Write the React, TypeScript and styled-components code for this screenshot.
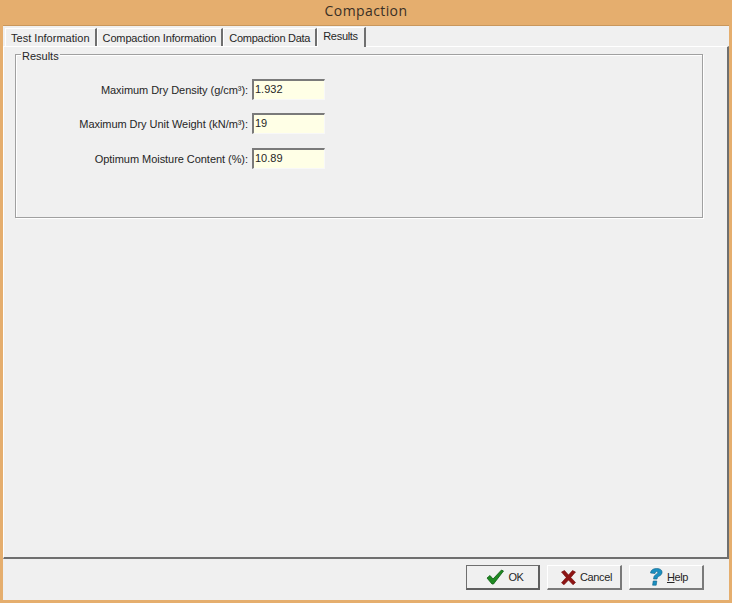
import React from "react";
import styled, { createGlobalStyle } from "styled-components";

const GlobalStyle = createGlobalStyle`
  html, body {
    margin: 0;
    padding: 0;
    background: #e5ae6e;
  }
  body {
    font-family: "Liberation Sans", Arial, sans-serif;
    font-size: 11px;
    color: #262626;
  }
`;

const fields = [
  { label: "Maximum Dry Density (g/cm³):", value: "1.932", gap: 13 },
  { label: "Maximum Dry Unit Weight (kN/m³):", value: "19", gap: 14 },
  { label: "Optimum Moisture Content (%):", value: "10.89", gap: 0 },
];

const tabs = [
  { title: "Test Information", spacing: 0.02 },
  { title: "Compaction Information", spacing: -0.14 },
  { title: "Compaction Data", spacing: -0.27 },
  { title: "Results", spacing: -0.3 },
];

const CheckIcon = () => (
  <svg width="18" height="16" viewBox="0 0 18 16">
    <path d="M1 9 L4 6.5 L7 10 L15.5 1 L17.5 2 L7.5 15 L6 15 Z" fill="#1f8a22" stroke="#0c5c10" strokeWidth="0.8" />
  </svg>
);

const CrossIcon = () => (
  <svg width="15" height="15" viewBox="0 0 15 15">
    <path d="M0.5 2 L3.5 0.5 L7.5 5 L11.5 0.5 L14.5 2 L9.8 7.5 L14.5 12.5 L12 14.8 L7.5 10 L3 14.8 L0.5 12.8 L5.2 7.5 Z" fill="#8e1414" stroke="#6e0c0c" strokeWidth="0.6" />
  </svg>
);

const HelpIcon = () => (
  <svg width="14" height="18" viewBox="0 0 14 18">
    <path d="M1.5 5 C2 1.5 5 0.5 7.5 0.5 C11 0.5 13.5 2 13 5 C12.6 7.5 9.5 8 8.5 9.5 L8 11 L4.5 11 L5 8.5 C5.5 6.8 8.8 6 8.8 4.4 C8.8 3.2 6.6 3 6 5.5 Z" fill="#1b8fc0" stroke="#0e6288" strokeWidth="0.6" />
    <path d="M4.2 13 L7.8 13 L7.2 17.2 L3.6 17.2 Z" fill="#1b8fc0" stroke="#0e6288" strokeWidth="0.6" />
  </svg>
);

export default function App() {
  return (
    <Window>
      <GlobalStyle />
      <TitleBar>Compaction</TitleBar>
      <Client>
        <TabStrip>
          {tabs.map((t, i) => (
            <Tab key={t.title} $active={i === 3} $spacing={t.spacing}>{t.title}</Tab>
          ))}
        </TabStrip>
        <TabPage>
          <GroupBox>
            <Legend>Results</Legend>
            <FieldGrid>
              {fields.map((f) => (
                <FieldRow key={f.label} $gap={f.gap}>
                  <FieldLabel>{f.label}</FieldLabel>
                  <FieldInput readOnly value={f.value} />
                </FieldRow>
              ))}
            </FieldGrid>
          </GroupBox>
        </TabPage>
        <Footer>
          <Button $default>
            <CheckIcon />
            <span>OK</span>
          </Button>
          <Button>
            <CrossIcon />
            <span>Cancel</span>
          </Button>
          <Button>
            <HelpIcon />
            <span><u>H</u>elp</span>
          </Button>
        </Footer>
      </Client>
    </Window>
  );
}

const Window = styled.div`
  width: 732px;
  height: 603px;
  display: flex;
  flex-direction: column;
  background: #e5ae6e;
  box-sizing: border-box;
  padding: 0 3px 3px;
  overflow: hidden;
`;

const TitleBar = styled.div`
  height: 25px;
  line-height: 21px;
  text-align: center;
  font-size: 14px;
  letter-spacing: 0.4px;
  color: #3a3026;
  font-family: "Open Sans", sans-serif;
  flex: none;
`;

const Client = styled.div`
  flex: 1;
  display: flex;
  flex-direction: column;
  background: #f0f0f0;
  border-top: 1px solid #c9975c;
`;

const TabStrip = styled.div`
  display: flex;
  align-items: flex-end;
  height: 20px;
  padding-left: 2px;
  flex: none;
`;

const Tab = styled.div<{ $active?: boolean; $spacing: number }>`
  box-sizing: border-box;
  height: ${(p) => (p.$active ? 20 : 18)}px;
  padding: ${(p) => (p.$active ? "2px 6px 0 5px" : "3px 5px 0 5px")};
  background: #f0f0f0;
  border-top: 1px solid #fff;
  border-left: 1px solid #fff;
  border-right: 2px solid #6f6f6f;
  white-space: nowrap;
  letter-spacing: ${(p) => p.$spacing}px;
  position: relative;
  z-index: ${(p) => (p.$active ? 1 : 0)};
  margin-bottom: ${(p) => (p.$active ? "-1px" : "0")};
`;

const TabPage = styled.div`
  flex: 1;
  box-sizing: border-box;
  border-top: 1px solid #fff;
  border-left: 1px solid #fff;
  border-right: 2px solid #6f6f6f;
  border-bottom: 2px solid #6f6f6f;
  padding: 7px 24px 0 11px;
`;

const GroupBox = styled.div`
  position: relative;
  height: 164px;
  box-sizing: border-box;
  border: 1px solid #a0a0a0;
  box-shadow: inset 1px 1px 0 #fff, 1px 1px 0 #fff;
`;

const Legend = styled.span`
  position: absolute;
  top: -5px;
  left: 5px;
  padding: 0 1px;
  background: #f0f0f0;
  line-height: 13px;
`;

const FieldGrid = styled.div`
  display: flex;
  flex-direction: column;
  padding-top: 24px;
`;

const FieldRow = styled.div<{ $gap: number }>`
  display: flex;
  align-items: center;
  justify-content: flex-start;
  margin-bottom: ${(p) => p.$gap}px;
`;

const FieldLabel = styled.label`
  width: 232px;
  text-align: right;
  margin-right: 4px;
  white-space: nowrap;
  letter-spacing: -0.05px;
`;

const FieldInput = styled.input`
  width: 73px;
  height: 21px;
  box-sizing: border-box;
  padding: 0 0 2px 1px;
  background: #ffffe6;
  border-style: solid;
  border-width: 2px 1px 1px 2px;
  border-color: #7a7a7a #f8f8f8 #f8f8f8 #7a7a7a;
  font-family: "Liberation Sans", Arial, sans-serif;
  font-size: 11px;
  color: #262626;
  outline: none;
`;

const Footer = styled.div`
  height: 41px;
  flex: none;
  display: flex;
  justify-content: flex-end;
  align-items: flex-start;
  gap: 7px;
  padding: 6px 25px 0 0;
  box-sizing: border-box;
`;

const Button = styled.div<{ $default?: boolean }>`
  width: ${(p) => (p.$default ? 74 : 75)}px;
  height: 25px;
  box-sizing: border-box;
  display: flex;
  align-items: center;
  justify-content: center;
  gap: 4px;
  padding-left: 5px;
  background: #f0f0f0;
  letter-spacing: -0.4px;
  border-style: solid;
  border-width: 1px 2px 2px 1px;
  border-color: ${(p) =>
    p.$default ? "#6f6f6f #5f5f5f #5f5f5f #6f6f6f" : "#fff #7a7a7a #7a7a7a #fff"};
`;
